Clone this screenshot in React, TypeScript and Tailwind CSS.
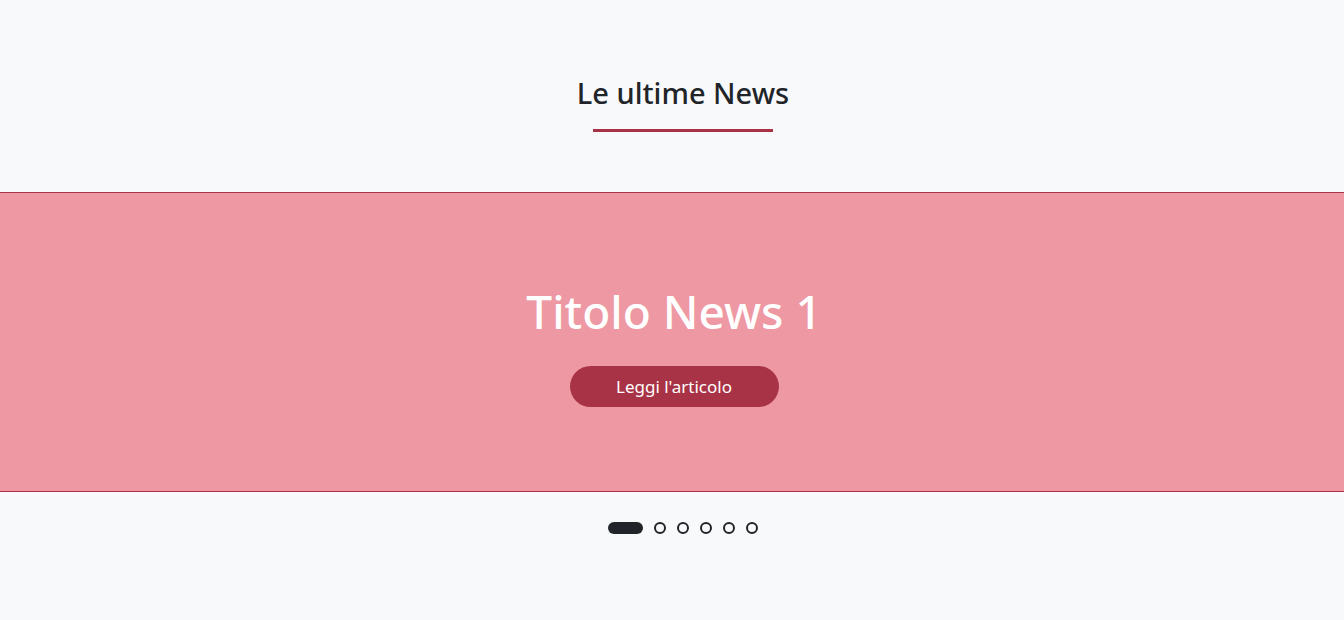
import React, { useState } from 'react';

export default function App() {
  const [active, setActive] = useState(0);
  const slides = ['Titolo News 1', 'Titolo News 2', 'Titolo News 3', 'Titolo News 4', 'Titolo News 5', 'Titolo News 6'];

  return (
    <div className="min-h-screen bg-[#f8f9fa] font-['Noto_Sans',sans-serif] text-[#212529]">
      {/* Heading */}
      <div className="flex flex-col items-center pt-[76px] pl-[22px]">
        <h2 className="text-[29px] leading-[1.2] font-medium">Le ultime News</h2>
        <div className="mt-[18px] h-[3px] w-[180px] bg-[#a93246]" />
      </div>

      {/* Slide */}
      <div className="mt-[60px] h-[300px] border-y border-[#a93246] bg-[#ed98a2]">
        <div className="flex flex-col items-center pt-[91px] pl-[4px]">
          <h1 className="text-[46px] leading-[1.2] font-medium text-white">{slides[active]}</h1>
          <button className="mt-[27px] h-[41px] w-[209px] rounded-full bg-[#a93346] text-[17px] text-white">
            Leggi l'articolo
          </button>
        </div>
      </div>

      {/* Indicators */}
      <div className="mt-[30px] flex items-center justify-center gap-[11px] pl-[22px]">
        {slides.map((s, i) =>
          i === active ? (
            <button key={s} onClick={() => setActive(i)} className="h-3 w-[35px] rounded-full bg-[#212529]" />
          ) : (
            <button key={s} onClick={() => setActive(i)} className="h-3 w-3 rounded-full border-2 border-[#212529]" />
          )
        )}
      </div>
    </div>
  );
}
